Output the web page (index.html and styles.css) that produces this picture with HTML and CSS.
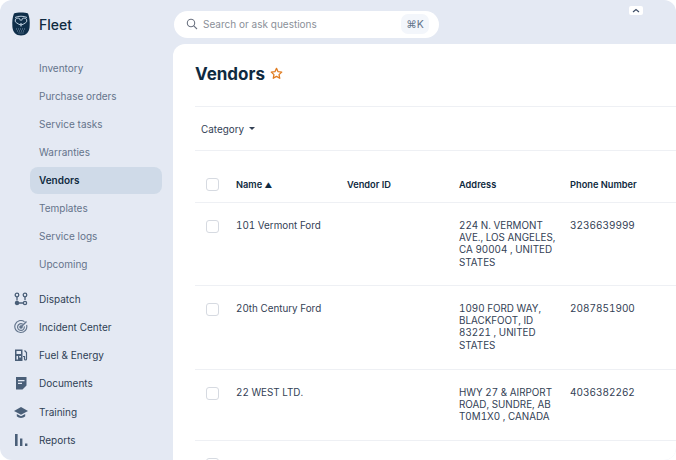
FILE: index.html
```html
<!DOCTYPE html>
<html lang="en">
<head>
<meta charset="utf-8">
<title>Vendors</title>
<link rel="stylesheet" href="styles.css">
</head>
<body>
<div class="app">
  <aside class="sidebar">
    <div class="brand">
      <svg class="logo" width="18" height="24" viewBox="0 0 18 24">
        <path d="M2 1.500C5 .3 13 .3 16 1.500C17.600 5 18 10 17.600 15C17.200 20 14 23.500 9 23.500C4 23.500 .8 20 .4 15C0 10 .4 5 2 1.500Z" fill="#0f2f4a"/>
        <path d="M3 5.500C6 3.800 12 3.800 15 5.500" fill="none" stroke="#cfe0ee" stroke-width=".9"/>
        <path d="M9 13C7.500 12.600 6 12 4.800 11A2.600 2.600 0 1 1 8.400 8.600M9 13C10.500 12.600 12 12 13.200 11A2.600 2.600 0 1 0 9.600 8.600" fill="none" stroke="#cfe0ee" stroke-width=".9"/>
        <path d="M9 11v3.500" stroke="#cfe0ee" stroke-width="1"/>
        <path d="M4 17h10M5 19h8M6.500 21h5" stroke="#7f9ab2" stroke-width=".9" stroke-dasharray="1 1"/>
      </svg>
      <span class="brand-name">Fleet</span>
    </div>
    <nav class="subnav">
      <a class="subitem">Inventory</a>
      <a class="subitem">Purchase orders</a>
      <a class="subitem">Service tasks</a>
      <a class="subitem">Warranties</a>
      <a class="subitem active">Vendors</a>
      <a class="subitem">Templates</a>
      <a class="subitem">Service logs</a>
      <a class="subitem">Upcoming</a>
    </nav>
    <nav class="mainnav">
      <a class="mainitem">
        <svg width="14" height="14" viewBox="0 0 14 14" fill="none" stroke="#4a5f78" stroke-width="1.300"><circle cx="3" cy="3" r="1.800"/><circle cx="11" cy="3" r="1.800"/><path d="M3 5v3.500M11 5v3"/><circle cx="3" cy="11" r="1.600" fill="#4a5f78"/><circle cx="11" cy="11" r="1.600"/><path d="M4.500 11h5"/></svg>
        <span>Dispatch</span>
      </a>
      <a class="mainitem">
        <svg width="14" height="14" viewBox="0 0 14 14" fill="none" stroke="#66788f" stroke-width="1.200"><path d="M10.500 1.800A6 6 0 1 0 12.600 5"/><path d="M8.800 4.200A3.400 3.400 0 1 0 10.300 6.400"/><circle cx="7" cy="7" r="1.200" fill="#4a5f78"/><path d="M7 7l5.500-5.500" stroke-width="1.400"/></svg>
        <span>Incident Center</span>
      </a>
      <a class="mainitem">
        <svg width="14" height="14" viewBox="0 0 14 14"><path fill="#4a5f78" fill-rule="evenodd" d="M1 1.500h7.500V13H1ZM2.500 3v3h4.500V3ZM2.500 8v3.500h1.500V8ZM5.200 8v1.500h1.800V8Z"/><path d="M10.500 2.500l2 2V11a1 1 0 0 1-2 0V8.500H9" fill="none" stroke="#4a5f78" stroke-width="1.200"/></svg>
        <span>Fuel &amp; Energy</span>
      </a>
      <a class="mainitem">
        <svg width="14" height="14" viewBox="0 0 14 14"><path fill="#4a5f78" fill-rule="evenodd" d="M2 1h10.500v8.500L8.500 13.500H2ZM4 4v1.200h6.500V4ZM4 6.800V8h4V6.800Z"/></svg>
        <span>Documents</span>
      </a>
      <a class="mainitem">
        <svg width="14" height="14" viewBox="0 0 14 14"><path fill="#4a5f78" d="M7 2L0 6l7 3.800L14 6Z"/><path fill="#4a5f78" d="M2.800 9v2.300C4 12.500 5.500 13 7 13s3-.5 4.200-1.700V9L7 11.200Z"/></svg>
        <span>Training</span>
      </a>
      <a class="mainitem">
        <svg width="14" height="14" viewBox="0 0 14 14" fill="#4a5f78"><rect x="1" y="1" width="2.600" height="12"/><rect x="6" y="5.500" width="2.400" height="7.500"/><rect x="11" y="10.500" width="2.400" height="2.500"/></svg>
        <span>Reports</span>
      </a>
    </nav>
  </aside>
  <div class="workspace">
    <header class="topbar">
      <div class="search">
        <svg width="12" height="12" viewBox="0 0 12 12" fill="none" stroke="#6b7280" stroke-width="1.100"><circle cx="5" cy="5" r="3.700"/><path d="M7.800 7.800L11 11"/></svg>
        <span class="search-text">Search or ask questions</span>
        <span class="kbd">⌘K</span>
      </div>
      <button class="collapse"><svg width="8" height="5" viewBox="0 0 8 5" fill="none" stroke="#3f4f68" stroke-width="1.200"><path d="M1 4l3-2.500L7 4"/></svg></button>
    </header>
    <main class="panel">
      <div class="title-row">
        <h1>Vendors</h1>
        <svg width="13" height="13" viewBox="0 0 24 24" fill="none" stroke="#e07b1f" stroke-width="2.400" stroke-linejoin="round"><path d="M12 2.500l2.900 6.200 6.800.8-5 4.600 1.300 6.700-6-3.400-6 3.400 1.300-6.700-5-4.600 6.800-.8Z"/></svg>
      </div>
      <div class="filters">
        <span class="filter">Category</span>
        <span class="caret"></span>
      </div>
      <table class="grid">
        <thead>
          <tr>
            <th class="c-check"><span class="box"></span></th>
            <th class="c-name">Name <span class="sort">▲</span></th>
            <th class="c-id">Vendor ID</th>
            <th class="c-addr">Address</th>
            <th class="c-phone">Phone Number</th>
          </tr>
        </thead>
        <tbody>
          <tr class="r1">
            <td class="c-check"><span class="box"></span></td>
            <td>101 Vermont Ford</td>
            <td></td>
            <td>224 N. VERMONT AVE., LOS ANGELES, CA 90004 , UNITED STATES</td>
            <td class="phone">3236639999</td>
          </tr>
          <tr class="r2">
            <td class="c-check"><span class="box"></span></td>
            <td>20th Century Ford</td>
            <td></td>
            <td>1090 FORD WAY, BLACKFOOT, ID 83221 , UNITED STATES</td>
            <td class="phone">2087851900</td>
          </tr>
          <tr class="r3">
            <td class="c-check"><span class="box"></span></td>
            <td>22 WEST LTD.</td>
            <td></td>
            <td>HWY 27 &amp; AIRPORT ROAD, SUNDRE, AB T0M1X0 , CANADA</td>
            <td class="phone">4036382262</td>
          </tr>
          <tr class="r4">
            <td class="c-check"><span class="box"></span></td>
            <td></td><td></td><td></td><td></td>
          </tr>
        </tbody>
      </table>
    </main>
  </div>
</div>
</body>
</html>
```

FILE: styles.css
```css
* { box-sizing: border-box; }
html, body { margin: 0; height: 100%; background: #fff; overflow: hidden; }
body { font-family: Inter, "Liberation Sans", sans-serif; }
.app { display: flex; width: 676px; height: 460px; background: #e4e9f3; border-radius: 12px; overflow: hidden; }
.sidebar { width: 173px; flex: none; }
.brand { display: flex; align-items: center; gap: 9px; height: 48px; padding-left: 12px; }
.logo { flex: none; }
.brand-name { font-size: 14px; font-weight: 500; color: #0f2a40; }
.subnav { display: flex; flex-direction: column; padding: 6px 11px 0 30px; }
.subitem { display: flex; align-items: center; height: 28px; padding-left: 9px; font-size: 10px; color: #64748b; border-radius: 8px; }
.subitem.active { height: 27px; margin-top: 1px; padding-bottom: 1px; background: #cfdae8; color: #0f2a40; font-weight: 600; }
.mainnav { display: flex; flex-direction: column; padding: 7px 0 0 14px; }
.mainitem { display: flex; align-items: center; gap: 11px; height: 28.150px; font-size: 10px; color: #2f3f55; font-weight: 400; }
.mainitem svg { flex: none; }
.workspace { flex: 1; display: flex; flex-direction: column; min-width: 0; }
.topbar { display: flex; height: 44px; flex: none; padding: 11px 0 0 1px; position: relative; }
.search { display: flex; align-items: center; width: 265px; height: 27px; background: #fff; border-radius: 14px; padding: 0 4px 1px 12px; }
.search-text { margin-left: 5px; font-size: 10px; color: #8a8f98; flex: 1; }
.kbd { display: flex; align-items: center; justify-content: center; width: 28px; height: 20px; margin-right: 6px; background: #f3f6fb; border-radius: 7px; font-size: 10.500px; color: #64748b; }
.collapse { position: absolute; left: 456px; top: 6px; width: 14px; height: 9px; padding: 0; border: 0; background: #fff; border-radius: 2px; display: flex; align-items: center; justify-content: center; }
.panel { flex: 1; background: #fff; border-top-left-radius: 12px; padding: 0 0 0 22px; overflow: hidden; }
.title-row { display: flex; align-items: center; gap: 5px; height: 63px; border-bottom: 1px solid #eef0f4; padding-bottom: 3px; }
h1 { margin: 0; font-size: 17px; font-weight: 700; color: #0f2a40; }
.filters { display: flex; align-items: center; gap: 4px; height: 44px; padding: 0 0 0 6px; border-bottom: 1px solid #eef0f4; }
.filter { font-size: 9.900px; color: #334155; }
.caret { width: 0; height: 0; border: 3.500px solid transparent; border-top: 3.500px solid #334155; border-bottom: 0; margin-left: 1px; }
.grid { border-collapse: collapse; table-layout: fixed; width: 481px; font-size: 9.850px; color: #334155; font-feature-settings: "tnum"; }
.grid th { height: 51px; padding: 16px 0 0; text-align: left; font-size: 9.250px; font-weight: 600; color: #0f2a40; border-bottom: 1px solid #eef0f4; font-feature-settings: normal; }
.grid td { padding: 16px 8px 0 0; vertical-align: top; line-height: 12.400px; border-bottom: 1px solid #eef0f4; }
.grid td.phone { font-size: 10px; }
.c-check { width: 41px; }
.c-name { width: 111px; }
.c-id { width: 112px; }
.c-addr { width: 111px; }
.c-phone { width: 106px; }
.grid td.c-check { padding: 17px 0 0 11px; }
.grid th.c-check { padding-left: 11px; }
.box { display: block; width: 13px; height: 13px; border: 1px solid #d6dae1; border-radius: 3px; background: #fff; }
.sort { font-size: 7.500px; }
.r1 td { height: 83px; }
.r2 td { height: 84px; }
.r3 td { height: 71px; }
.r4 td { height: 40px; border-bottom: 0; }
```
